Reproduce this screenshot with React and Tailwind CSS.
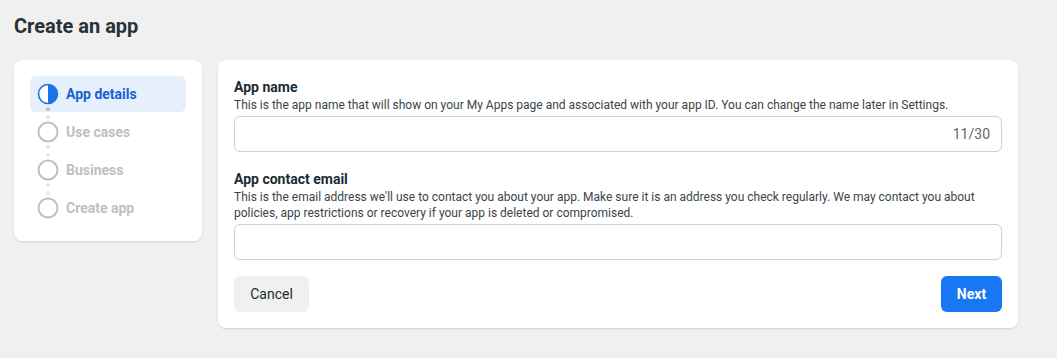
import React from 'react'

const steps = ["App details", "Use cases", "Business", "Create app"]

function StepIcon({ active }) {
  if (active) {
    return (
      <svg width="22" height="22" viewBox="0 0 22 22">
        <circle cx="11" cy="11" r="9.5" fill="white" stroke="#1b74e4" strokeWidth="1.6" />
        <path d="M11 1.5 A9.5 9.5 0 0 1 11 20.5 Z" fill="#1b74e4" />
      </svg>
    )
  }
  return (
    <svg width="22" height="22" viewBox="0 0 22 22">
      <circle cx="11" cy="11" r="9.5" fill="white" stroke="#bcc0c4" strokeWidth="2" />
    </svg>
  )
}

function Dots({ dark }) {
  return (
    <div className="flex flex-col items-center gap-[4px] w-[22px] h-[14px] justify-center">
      <div className={`w-[4px] h-[4px] rounded-full ${dark ? "bg-[#bcc0c4]" : "bg-[#e4e6eb]"}`} />
      <div className="w-[4px] h-[4px] rounded-full bg-[#e4e6eb]" />
    </div>
  )
}

export default function App() {
  return (
    <div className="w-full min-h-[358px] bg-[#f0f0f0] font-['Roboto',sans-serif] text-[#1c2b33] px-[14px] pt-[14px]">
      <h1 className="text-[20px] font-bold leading-[24px] text-[#283136]">Create an app</h1>

      <div className="flex items-start gap-[16px] mt-[22px]">
        {/* Steps */}
        <div className="w-[188px] bg-white rounded-[8px] shadow-[0_1px_2px_rgba(0,0,0,0.12)] px-[16px] pt-[16px] pb-[15px]">
          {steps.map((s, i) => (
            <div key={s}>
              <div className={`flex items-center gap-[7px] h-[36px] pl-[7px] rounded-[6px] ${i === 0 ? "bg-[#e6f0fc]" : ""}`}>
                <StepIcon active={i === 0} />
                <span className={`text-[14px] font-bold ${i === 0 ? "text-[#1b5fd0]" : "text-[#bcc0c4]"}`}>{s}</span>
              </div>
              {i < steps.length - 1 && (
                <div className="pl-[7px] -my-[6px] relative">
                  <Dots dark={i === 0} />
                </div>
              )}
            </div>
          ))}
        </div>

        {/* Form */}
        <div className="flex-1 mr-[25px] bg-white rounded-[8px] shadow-[0_1px_2px_rgba(0,0,0,0.12)] px-[16px] pt-[18px] pb-[16px]">
          <div className="text-[14px] font-bold leading-[18px]">App name</div>
          <p className="text-[12px] leading-[16px] text-[#3b4449] mt-[1px]">
            This is the app name that will show on your My Apps page and associated with your app ID. You can change the name later in Settings.
          </p>
          <div className="mt-[3px] h-[36px] border border-[#ced0d4] rounded-[6px] flex items-center justify-end px-[11px]">
            <span className="text-[14px] text-[#65676b]">11/30</span>
          </div>

          <div className="text-[14px] font-bold leading-[18px] mt-[18px]">App contact email</div>
          <p className="text-[12px] leading-[16px] text-[#3b4449] mt-[1px]">
            This is the email address we'll use to contact you about your app. Make sure it is an address you check regularly. We may contact you about policies, app restrictions or recovery if your app is deleted or compromised.
          </p>
          <div className="mt-[3px] h-[36px] border border-[#ced0d4] rounded-[6px]" />

          <div className="flex justify-between mt-[16px]">
            <button className="h-[36px] w-[75px] rounded-[6px] bg-[#f0f0f0] text-[14px] text-[#1c2b33]">Cancel</button>
            <button className="h-[36px] w-[61px] rounded-[6px] bg-[#1877f2] text-[14px] font-bold text-white">Next</button>
          </div>
        </div>
      </div>
    </div>
  )
}
